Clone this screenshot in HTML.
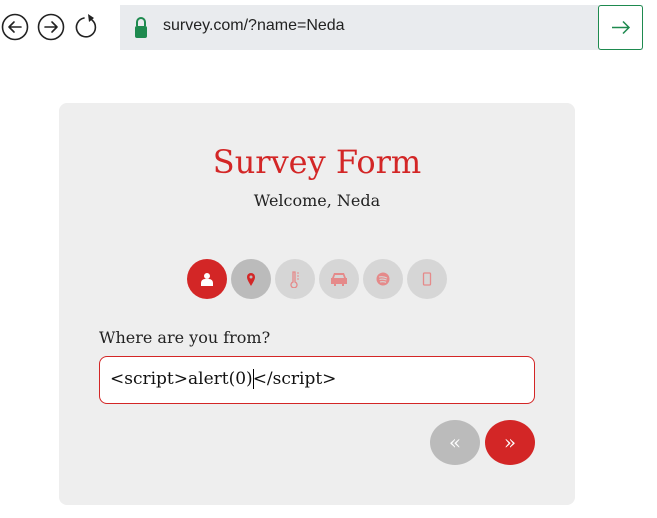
<!DOCTYPE html>
<html><head><style>
body{margin:0;width:657px;height:518px;background:#fff;position:relative;overflow:hidden;font-family:"DejaVu Serif",serif}
.abs{position:absolute}
.url{left:120px;top:5px;width:523px;height:45px;background:#e9ebee}
.go{left:598px;top:5px;width:43px;height:43px;border:1px solid #1e8a4f;border-radius:3px;background:#fff}
.card{left:59px;top:103px;width:516px;height:402px;background:#eeeeee;border-radius:8px}
.c{width:40px;height:40px;border-radius:50%;top:259px;background:#d6d6d6;display:flex;align-items:center;justify-content:center}
</style></head><body>
<svg class="abs" style="left:0;top:0" width="110" height="55">
<g fill="none" stroke="#222" stroke-width="1.6" stroke-linecap="round" stroke-linejoin="round">
<circle cx="15" cy="27" r="12.5"/><path d="M21 27H9M14 22l-5 5 5 5"/>
<circle cx="51" cy="27" r="12.5"/><path d="M45 27h12M52 22l5 5-5 5"/>
<path d="M92 20A9.5 9.5 0 1 1 84 18"/>
</g><path d="M88 14l6 4-5 4z" fill="#222"/>
</svg>
<div class="abs url"></div>
<svg class="abs" style="left:133px;top:16px" width="16" height="24"><path d="M4 10V6a4 4 0 0 1 8 0v4" fill="none" stroke="#1e8a4f" stroke-width="2"/><rect x="2" y="10" width="12" height="12" rx="2" fill="#1e8a4f"/></svg>
<div class="abs" style="left:163px;top:17px;font:16px 'Liberation Sans',sans-serif;color:#222">survey.com/?name=Neda</div>
<div class="abs go"><svg width="43" height="43"><path d="M13 21.5h17M24 15.5l6 6-6 6" fill="none" stroke="#1e8a4f" stroke-width="1.5"/></svg></div>
<div class="abs card"></div>
<div class="abs" style="left:59px;width:516px;top:143px;text-align:center;font-size:32px;color:#d32626">Survey Form</div>
<div class="abs" style="left:59px;width:516px;top:191px;text-align:center;font-size:16px;color:#222">Welcome, Neda</div>
<div class="abs c" style="left:187px;background:#d32626"><svg width="14" height="14"><circle cx="7" cy="4" r="3" fill="#fff"/><path d="M1 14v-3a4 4 0 0 1 4-4h4a4 4 0 0 1 4 4v3z" fill="#fff"/></svg></div>
<div class="abs c" style="left:231px;background:#bbbbbb"><svg width="10" height="14"><path d="M5 14C2 9 1 7 1 5a4 4 0 0 1 8 0c0 2-1 4-4 9z" fill="#d32626"/><circle cx="5" cy="5" r="1.5" fill="#bbb"/></svg></div>
<div class="abs c" style="left:275px"><svg width="12" height="18"><path d="M4 2h2v10a3 3 0 1 1-2 0z" fill="none" stroke="#e58a8a" stroke-width="1.3"/><path d="M8 3h2M8 6h2M8 9h2" stroke="#e58a8a"/></svg></div>
<div class="abs c" style="left:319px"><svg width="18" height="14"><path d="M4 1h10l2 5h1v6h-3v2h-2v-2H6v2H4v-2H1V6h1z" fill="#e58a8a"/><path d="M5 3h8l1 3H4z" fill="#d6d6d6"/></svg></div>
<div class="abs c" style="left:363px"><svg width="14" height="14"><circle cx="7" cy="7" r="6.5" fill="#e58a8a"/><path d="M3 5q4-1 8 1M3.5 7.5q3.5-1 7 .5M4 10q3-.8 6 .3" fill="none" stroke="#d6d6d6" stroke-width="1.1"/></svg></div>
<div class="abs c" style="left:407px"><svg width="10" height="14"><rect x="1.5" y="1" width="7" height="12" rx="1" fill="none" stroke="#e58a8a" stroke-width="1.3"/></svg></div>
<div class="abs" style="left:99px;top:328px;font-size:16px;color:#222">Where are you from?</div>
<div class="abs" style="left:99px;top:356px;width:434px;height:46px;border:1px solid #d32626;border-radius:8px;background:#fff"></div>
<div class="abs" style="left:110px;top:369px;font-size:17px;color:#111">&lt;script&gt;alert(0)<span style="border-left:1px solid #000;margin-right:-1px"></span>&lt;/script&gt;</div>
<div class="abs" style="left:430px;top:420px;width:50px;height:45px;border-radius:50%;background:#bbbbbb;color:#fff;text-align:center;line-height:44px;font-size:20px">«</div>
<div class="abs" style="left:485px;top:420px;width:50px;height:45px;border-radius:50%;background:#d32626;color:#fff;text-align:center;line-height:44px;font-size:20px">»</div>
</body></html>
